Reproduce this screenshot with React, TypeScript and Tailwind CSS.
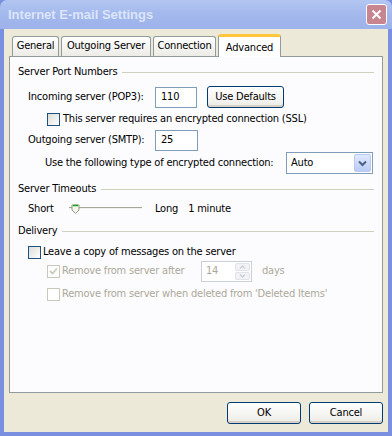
import { ReactNode } from "react";

const font = { fontFamily: '"DejaVu Sans Condensed", "DejaVu Sans", sans-serif', letterSpacing: "-0.2px" };

function Header({ label }: { label: string }) {
  return (
    <div className="flex items-center h-[14px] pr-[8px]">
      <span className="text-[11px] text-black">{label}</span>
      <div className="flex-1 ml-[5px] h-px bg-[#d0d0bf]" />
    </div>
  );
}

function Check({ checked, disabled }: { checked?: boolean; disabled?: boolean }) {
  return (
    <div
      className={
        "w-[13px] h-[13px] border flex items-center justify-center shrink-0 " +
        (disabled ? "border-[#cac8bb] bg-white" : "border-[#1c5180] bg-gradient-to-br from-[#dcdcd7] to-white")
      }
    >
      {checked && (
        <svg width="9" height="9" viewBox="0 0 9 9">
          <path d="M1 4 L3.5 6.5 L8 1.5" stroke="#cac8bb" strokeWidth="1.8" fill="none" />
        </svg>
      )}
    </div>
  );
}

function XpButton({ children, className = "" }: { children: ReactNode; className?: string }) {
  return (
    <div
      className={
        "flex items-center justify-center border border-[#003c74] rounded-[3px] bg-gradient-to-b from-white to-[#ecebe6] text-[11px] text-black shadow-[inset_0_-2px_0_#d6d0c5] " +
        className
      }
    >
      {children}
    </div>
  );
}

function Input({ value, className = "" }: { value: string; className?: string }) {
  return (
    <div className={"flex items-center border border-[#7f9db9] bg-white pl-[5px] text-[11px] text-black " + className}>
      {value}
    </div>
  );
}

function Tab({ label, active, className = "" }: { label: string; active?: boolean; className?: string }) {
  if (active) {
    return (
      <div
        className={
          "relative -mb-px z-10 h-[23px] flex justify-center items-start pt-[3px] bg-white border border-b-0 border-[#919b9c] rounded-t-[3px] border-t-[3px] border-t-[#ffc83c] text-[11px] text-black " +
          className
        }
      >
        {label}
      </div>
    );
  }
  return (
    <div
      className={
        "h-[20px] mt-[2px] flex justify-center items-center bg-gradient-to-b from-white to-[#ecebe6] border border-b-0 border-[#919b9c] rounded-t-[3px] text-[11px] text-black " +
        className
      }
    >
      {label}
    </div>
  );
}

export default function App() {
  return (
    <div style={font} className="w-[392px] h-[436px] flex flex-col bg-[#7b8fe0] select-none">
      {/* Title bar */}
      <div className="h-[29px] flex items-center pl-[8px] pr-[5px] bg-gradient-to-b from-[#b3c6f2] via-[#a3b8ec] to-[#9db2ea] rounded-t-[7px]">
        <span
          className="flex-1 text-[13px] font-bold text-[#dce5f9] tracking-normal"
          style={{ fontFamily: '"Liberation Sans", Arial, sans-serif' }}
        >
          Internet E-mail Settings
        </span>
        <div className="w-[21px] h-[21px] rounded-[3px] border border-white bg-[#c7858f] flex items-center justify-center">
          <svg width="11" height="11" viewBox="0 0 11 11">
            <path d="M1.5 1.5 L9.5 9.5 M9.5 1.5 L1.5 9.5" stroke="white" strokeWidth="2" />
          </svg>
        </div>
      </div>

      {/* Body */}
      <div className="flex-1 mx-[4px] mb-[4px] bg-[#ece9d8] flex flex-col px-[5px] pt-[5px]">
        {/* Tabs */}
        <div className="flex items-end h-[22px] pl-[3px] gap-[2px]">
          <Tab label="General" className="w-[47px]" />
          <Tab label="Outgoing Server" className="w-[90px]" />
          <Tab label="Connection" className="w-[63px]" />
          <Tab label="Advanced" active className="w-[63px]" />
        </div>

        {/* Panel */}
        <div className="h-[337px] border border-[#919b9c] bg-[#fcfcfe] flex flex-col pl-[8px] pt-[8px]">
          <Header label="Server Port Numbers" />

          <div className="flex items-center h-[22px] mt-[7px] pl-[10px]">
            <span className="w-[127px] text-[11px]">Incoming server (POP3):</span>
            <Input value="110" className="w-[42px] h-[21px]" />
            <XpButton className="ml-[10px] w-[77px] h-[22px]">Use Defaults</XpButton>
          </div>

          <div className="flex items-center h-[14px] mt-[4px] pl-[29px] gap-[3px]">
            <Check />
            <span className="text-[11px]">This server requires an encrypted connection (SSL)</span>
          </div>

          <div className="flex items-center h-[21px] mt-[4px] pl-[10px]">
            <span className="w-[127px] text-[11px]">Outgoing server (SMTP):</span>
            <Input value="25" className="w-[43px] h-[21px]" />
          </div>

          <div className="flex items-center h-[22px] mt-[1px] pl-[27px]">
            <span className="w-[241px] text-[11px]">Use the following type of encrypted connection:</span>
            <div className="w-[87px] h-[22px] border border-[#7f9db9] bg-white flex items-center">
              <span className="flex-1 pl-[4px] text-[11px]">Auto</span>
              <div className="w-[17px] h-[18px] mr-[1px] rounded-[2px] border border-[#b9c9ef] bg-gradient-to-b from-[#e0e8fd] to-[#bacbf5] flex items-center justify-center">
                <svg width="9" height="7" viewBox="0 0 9 7">
                  <path d="M1 1.5 L4.5 5 L8 1.5" stroke="#4d6185" strokeWidth="2" fill="none" />
                </svg>
              </div>
            </div>
          </div>

          <div className="mt-[8px]">
            <Header label="Server Timeouts" />
          </div>

          <div className="flex items-center h-[18px] mt-[4px] pl-[10px]">
            <span className="w-[40px] text-[11px]">Short</span>
            <svg width="76" height="14" viewBox="0 0 76 14" className="shrink-0">
              <path d="M1 5.5 H74" stroke="#a8a89a" strokeWidth="1" />
              <path d="M1 6.5 H74" stroke="#f2f2ee" strokeWidth="1" />
              <path d="M4 3 H11 V8 L7.5 11.5 L4 8 Z" fill="#f4f6ef" stroke="#8c9e7c" strokeWidth="1" />
              <path d="M5 3.5 H10" stroke="#21a121" strokeWidth="1.5" />
            </svg>
            <span className="ml-[11px] text-[11px]">Long</span>
            <span className="ml-[10px] text-[11px]">1 minute</span>
          </div>

          <div className="mt-[6px]">
            <Header label="Delivery" />
          </div>

          <div className="flex items-center h-[14px] mt-[7px] pl-[10px] gap-[2px]">
            <Check />
            <span className="text-[11px]">Leave a copy of messages on the server</span>
          </div>

          <div className="flex items-center h-[21px] mt-[2px] pl-[29px]">
            <Check checked disabled />
            <span className="ml-[2px] w-[139px] text-[11px] text-[#aca899]">Remove from server after</span>
            <div className="w-[51px] h-[21px] border border-[#c9d0d8] bg-white flex items-center">
              <span className="flex-1 pl-[4px] text-[11px] text-[#aca899]">14</span>
              <div className="w-[15px] h-[17px] mr-[1px] flex flex-col gap-px">
                <div className="flex-1 rounded-[2px] border border-[#e2e3ea] bg-[#f3f3f5] flex items-center justify-center">
                  <svg width="7" height="4" viewBox="0 0 7 4"><path d="M1 3.5 L3.5 1 L6 3.5" stroke="#c8ccd6" strokeWidth="1.3" fill="none" /></svg>
                </div>
                <div className="flex-1 rounded-[2px] border border-[#e2e3ea] bg-[#f3f3f5] flex items-center justify-center">
                  <svg width="7" height="4" viewBox="0 0 7 4"><path d="M1 0.5 L3.5 3 L6 0.5" stroke="#c8ccd6" strokeWidth="1.3" fill="none" /></svg>
                </div>
              </div>
            </div>
            <span className="ml-[10px] text-[11px] text-[#aca899]">days</span>
          </div>

          <div className="flex items-center h-[14px] mt-[5px] pl-[29px] gap-[2px]">
            <Check disabled />
            <span className="text-[11px] text-[#aca899]">Remove from server when deleted from 'Deleted Items'</span>
          </div>
        </div>

        {/* Footer buttons */}
        <div className="flex justify-end gap-[8px] mt-[9px]">
          <XpButton className="w-[74px] h-[22px]">OK</XpButton>
          <XpButton className="w-[74px] h-[22px]">Cancel</XpButton>
        </div>
      </div>
    </div>
  );
}
